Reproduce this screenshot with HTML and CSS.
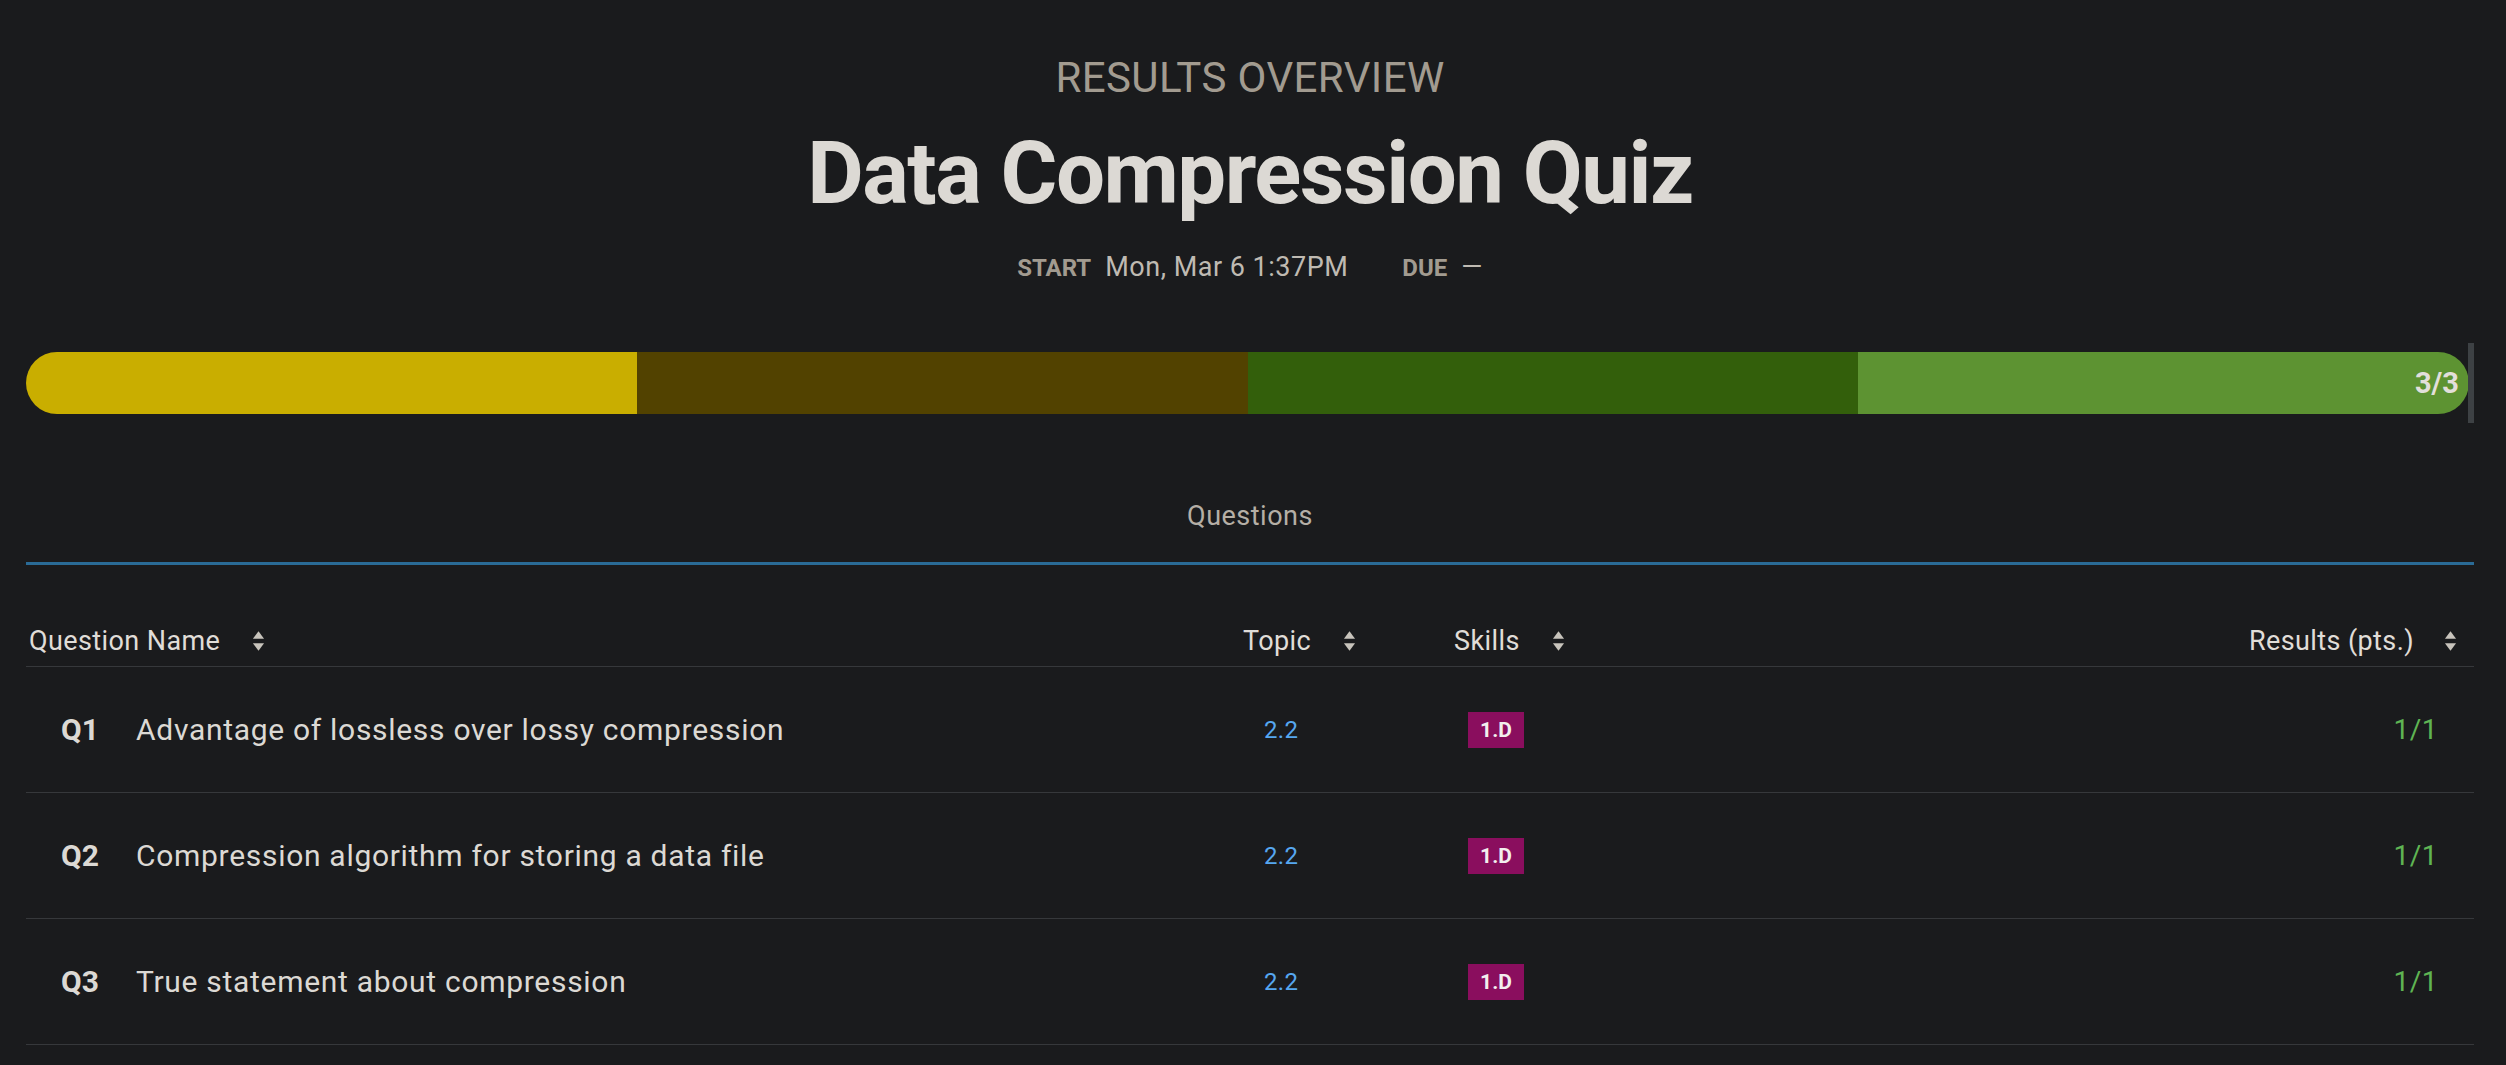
FILE: index.html
```html
<!DOCTYPE html>
<html lang="en">
<head>
<meta charset="utf-8">
<title>Data Compression Quiz – Results Overview</title>
<link rel="stylesheet" href="styles.css">
</head>
<body>
<main class="page">
  <header class="hero">
    <div class="eyebrow">RESULTS OVERVIEW</div>
    <h1 class="title">Data Compression Quiz</h1>
    <div class="meta">
      <span class="meta-label">START</span>
      <span class="meta-value">Mon, Mar 6 1:37PM</span>
      <span class="meta-label meta-due">DUE</span>
      <span class="meta-value">—</span>
    </div>
  </header>

  <section class="progress">
    <div class="bar">
      <div class="seg seg-yellow"></div>
      <div class="seg seg-brown"></div>
      <div class="seg seg-dkgreen"></div>
      <div class="seg seg-green"><span class="bar-label">3/3</span></div>
    </div>
    <div class="marker"></div>
  </section>

  <nav class="tabs">
    <span class="tab">Questions</span>
  </nav>

  <section class="table">
    <div class="row head">
      <div class="cell hcell">Question Name <svg class="sort" viewBox="0 0 14 22"><path d="M7 0 L13 8 L1 8 Z"/><path d="M1 13 L13 13 L7 21 Z"/></svg></div>
      <div class="cell hcell">Topic <svg class="sort" viewBox="0 0 14 22"><path d="M7 0 L13 8 L1 8 Z"/><path d="M1 13 L13 13 L7 21 Z"/></svg></div>
      <div class="cell hcell">Skills <svg class="sort" viewBox="0 0 14 22"><path d="M7 0 L13 8 L1 8 Z"/><path d="M1 13 L13 13 L7 21 Z"/></svg></div>
      <div class="cell hcell hresult">Results (pts.) <svg class="sort" viewBox="0 0 14 22"><path d="M7 0 L13 8 L1 8 Z"/><path d="M1 13 L13 13 L7 21 Z"/></svg></div>
    </div>

    <div class="row item">
      <div class="cell qname"><span class="qnum">Q1</span><span class="qtext">Advantage of lossless over lossy compression</span></div>
      <div class="cell topic">2.2</div>
      <div class="cell skills"><span class="badge">1.D</span></div>
      <div class="cell result">1/1</div>
    </div>
    <div class="row item">
      <div class="cell qname"><span class="qnum">Q2</span><span class="qtext">Compression algorithm for storing a data file</span></div>
      <div class="cell topic">2.2</div>
      <div class="cell skills"><span class="badge">1.D</span></div>
      <div class="cell result">1/1</div>
    </div>
    <div class="row item">
      <div class="cell qname"><span class="qnum">Q3</span><span class="qtext">True statement about compression</span></div>
      <div class="cell topic">2.2</div>
      <div class="cell skills"><span class="badge">1.D</span></div>
      <div class="cell result">1/1</div>
    </div>
  </section>
</main>
</body>
</html>
```

FILE: styles.css
```css
html, body {
  margin: 0;
  padding: 0;
  background: #1a1b1d;
}

body {
  font-family: Roboto, "Liberation Sans", sans-serif;
  color: #dcd9d4;
}

.page {
  padding: 57px 32px 0 26px;
}

.hero {
  display: flex;
  flex-direction: column;
  align-items: center;
}

.eyebrow {
  font-size: 42px;
  line-height: 1;
  font-weight: 400;
  color: #a29b90;
  letter-spacing: 0.4px;
}

.title {
  margin: 31px 0 0;
  font-size: 87px;
  line-height: 1;
  font-weight: 700;
  color: #dcd9d4;
  letter-spacing: -1.5px;
}

.meta {
  margin-top: 37px;
  display: flex;
  align-items: baseline;
  line-height: 1;
}

.meta-label {
  font-size: 24px;
  font-weight: 700;
  color: #a29b90;
  margin-right: 14px;
}

.meta-due {
  margin-left: 54px;
}

.meta-value {
  font-size: 27px;
  letter-spacing: 0.5px;
  color: #bfbab2;
}

.progress {
  margin-top: 62px;
  display: flex;
  align-items: center;
}

.bar {
  flex: 1;
  height: 62px;
  border-radius: 31px;
  overflow: hidden;
  display: flex;
}

.seg {
  flex: 1;
  display: flex;
  align-items: center;
  justify-content: flex-end;
}

.seg-yellow { background: #c9ae00; }
.seg-brown { background: #524200; }
.seg-dkgreen { background: #335f0b; }
.seg-green { background: #5d9332; }

.bar-label {
  font-size: 29px;
  font-weight: 700;
  color: #e2dfda;
  padding-right: 10px;
}

.marker {
  width: 6px;
  height: 80px;
  margin-left: -1px;
  background: #3d4144;
}

.tabs {
  margin-top: 80px;
  display: flex;
  justify-content: center;
  padding-bottom: 32px;
  border-bottom: 3px solid #2a6b96;
}

.tab {
  font-size: 27px;
  letter-spacing: 0.5px;
  line-height: 1;
  color: #b5afa6;
}

.table {
  display: flex;
  flex-direction: column;
}

.row {
  display: grid;
  grid-template-columns: 1214px 211px 211px 1fr;
  border-bottom: 1px solid #36383b;
}

.head {
  padding-top: 63px;
  padding-bottom: 11px;
}

.cell {
  display: flex;
  align-items: center;
}

.hcell {
  font-size: 27px;
  letter-spacing: 0.4px;
  line-height: 1;
  color: #e0ddd8;
  padding-left: 3px;
  gap: 32px;
}

.hresult {
  justify-content: flex-end;
  padding-right: 17px;
  gap: 30px;
}

.sort {
  width: 13px;
  height: 21px;
  fill: #c8c4bc;
}

.item {
  height: 125px;
}

.qname {
  padding-left: 35px;
  font-size: 30px;
}

.qnum {
  font-weight: 700;
  width: 75px;
  flex: none;
}

.qtext {
  color: #dcd9d4;
  letter-spacing: 0.7px;
}

.topic {
  padding-left: 24px;
  font-size: 24px;
  letter-spacing: 0.3px;
  color: #56a7f0;
}

.skills {
  padding-left: 17px;
}

.badge {
  display: inline-flex;
  align-items: center;
  justify-content: center;
  width: 56px;
  height: 36px;
  background: #8a0e5e;
  color: #f2eeee;
  font-size: 21px;
  font-weight: 700;
}

.result {
  justify-content: flex-end;
  padding-right: 36px;
  font-size: 28px;
  letter-spacing: 0.5px;
  color: #5fb453;
}
```
